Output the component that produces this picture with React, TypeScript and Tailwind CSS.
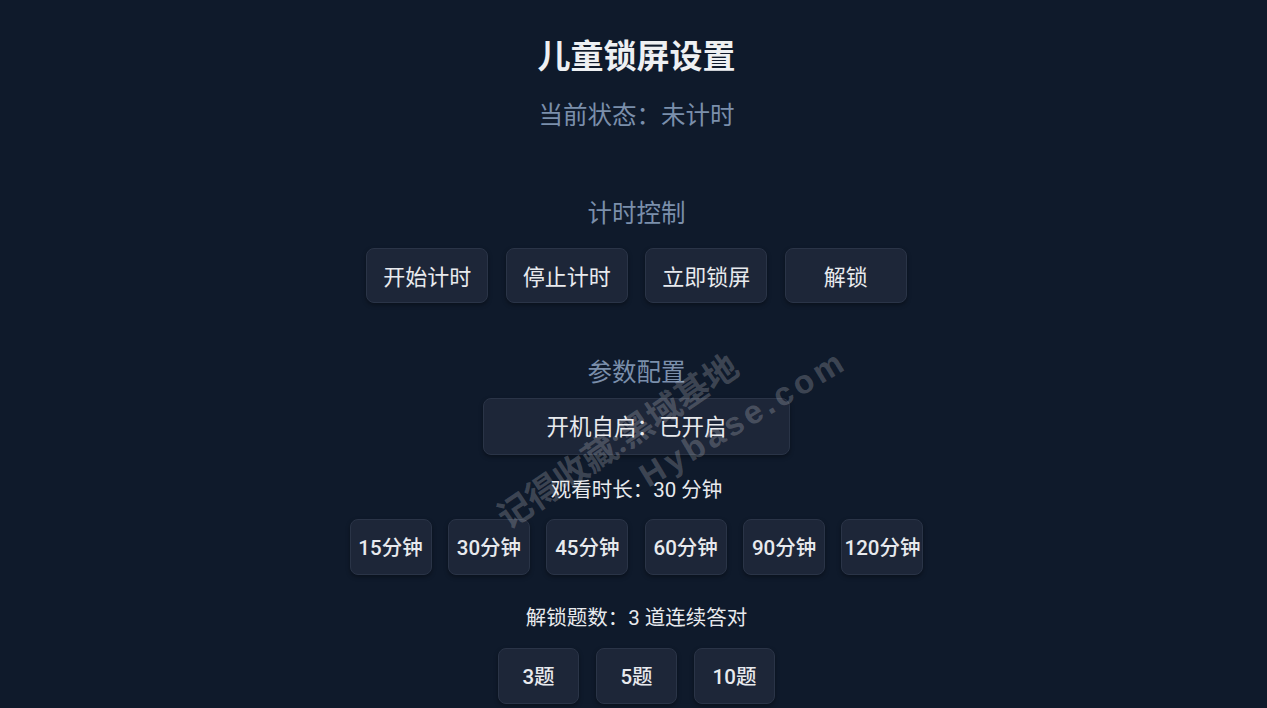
import React from "react";

const FONT = { fontFamily: 'Roboto, "Noto Sans CJK SC", "Noto Sans", sans-serif' };

const btn =
  "flex items-center justify-center rounded-lg border border-[#2a3447] bg-[#1d2638] pt-[3px] text-[#e8eaee] shadow-[0_2px_4px_rgba(0,0,0,0.35)]";

const timerActions = ["开始计时", "停止计时", "立即锁屏", "解锁"];
const durations = ["15分钟", "30分钟", "45分钟", "60分钟", "90分钟", "120分钟"];
const questions = ["3题", "5题", "10题"];

export default function App() {
  return (
    <div
      className="relative h-[708px] w-full overflow-hidden bg-[#0f1a2b]"
      style={FONT}
    >
      <div className="flex flex-col items-center pl-[6px] pt-[37px]">
        <h1 className="text-[33px] leading-[40px] font-bold text-[#eef0f3]">
          儿童锁屏设置
        </h1>
        <p className="mt-[23px] text-[24.5px] leading-[32px] text-[#7b8fab]">
          当前状态：未计时
        </p>

        <h2 className="mt-[66px] text-[24.5px] leading-[32px] text-[#7b8fab]">
          计时控制
        </h2>
        <div className="mt-[18px] flex gap-[17.5px]">
          {timerActions.map((t) => (
            <button key={t} className={`${btn} h-[55px] w-[122px] text-[22px]`}>
              {t}
            </button>
          ))}
        </div>

        <h2 className="mt-[54px] text-[24.5px] leading-[32px] text-[#7b8fab]">
          参数配置
        </h2>
        <button className={`${btn} mt-[9px] h-[57px] w-[307px] text-[22.5px]`}>
          开机自启：已开启
        </button>

        <p className="mt-[21px] text-[20.5px] leading-[28px] text-[#e8eaee]">
          观看时长：30 分钟
        </p>
        <div className="mt-[15px] flex gap-[16.4px]">
          {durations.map((d) => (
            <button
              key={d}
              className={`${btn} h-[56px] w-[82px] text-[20.5px] font-medium`}
            >
              {d}
            </button>
          ))}
        </div>

        <p className="mt-[29px] text-[20.5px] leading-[28px] text-[#e8eaee]">
          解锁题数：3 道连续答对
        </p>
        <div className="mt-[16px] flex gap-[17px]">
          {questions.map((q) => (
            <button
              key={q}
              className={`${btn} h-[56px] w-[81px] text-[20.5px] font-medium`}
            >
              {q}
            </button>
          ))}
        </div>
      </div>

      {/* site watermark */}
      <span className="pointer-events-none absolute left-[618px] top-[442px] -translate-x-1/2 -translate-y-1/2 -rotate-[34deg] whitespace-nowrap text-[34px] font-bold text-white/20">
        记得收藏:黑域基地
      </span>
      <span
        className="pointer-events-none absolute left-[743px] top-[418px] -translate-x-1/2 -translate-y-1/2 -rotate-[31deg] whitespace-nowrap text-[33px] font-bold tracking-[4px] text-white/20"
        style={{ fontFamily: '"Liberation Sans", Arial, sans-serif' }}
      >
        Hybase.com
      </span>
    </div>
  );
}
